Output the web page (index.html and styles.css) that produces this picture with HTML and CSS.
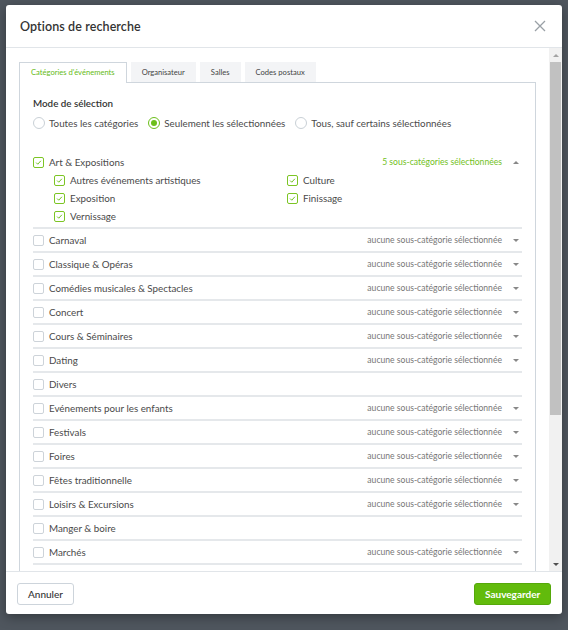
FILE: index.html
```html
<!DOCTYPE html>
<html lang="fr">
<head>
<meta charset="utf-8">
<title>Options de recherche</title>
<link rel="stylesheet" href="styles.css">
</head>
<body>
<div class="modal">
  <header class="modal-header">
    <h1 class="modal-title">Options de recherche</h1>
    <svg class="close" viewBox="0 0 12 12" width="12" height="12"><path d="M1 1 L11 11 M11 1 L1 11" stroke="#9aa0a6" stroke-width="1.3" fill="none"/></svg>
  </header>
  <div class="modal-body">
    <div class="content">
      <ul class="tabs">
        <li class="tab active">Catégories d'événements</li>
        <li class="tab">Organisateur</li>
        <li class="tab">Salles</li>
        <li class="tab">Codes postaux</li>
      </ul>
      <div class="panel">
        <div class="mode-label">Mode de sélection</div>
        <div class="radios">
          <label class="radio"><span class="circle"></span>Toutes les catégories</label>
          <label class="radio"><span class="circle on"></span>Seulement les sélectionnées</label>
          <label class="radio"><span class="circle"></span>Tous, sauf certains sélectionnées</label>
        </div>
        <ul class="cats">
          <li class="cat cat-open">
            <div class="cat-head">
              <span class="box on"><svg viewBox="0 0 11 11"><path d="M2.6 5.6 L4.6 7.6 L8.4 3.4"/></svg></span>
              <span class="cat-name">Art &amp; Expositions</span>
              <span class="sub sub-on">5 sous-catégories sélectionnées</span>
              <span class="caret up"></span>
            </div>
            <div class="subs">
              <div class="subitem"><span class="box on"><svg viewBox="0 0 11 11"><path d="M2.6 5.6 L4.6 7.6 L8.4 3.4"/></svg></span>Autres événements artistiques</div>
              <div class="subitem"><span class="box on"><svg viewBox="0 0 11 11"><path d="M2.6 5.6 L4.6 7.6 L8.4 3.4"/></svg></span>Culture</div>
              <div class="subitem"><span class="box on"><svg viewBox="0 0 11 11"><path d="M2.6 5.6 L4.6 7.6 L8.4 3.4"/></svg></span>Exposition</div>
              <div class="subitem"><span class="box on"><svg viewBox="0 0 11 11"><path d="M2.6 5.6 L4.6 7.6 L8.4 3.4"/></svg></span>Finissage</div>
              <div class="subitem"><span class="box on"><svg viewBox="0 0 11 11"><path d="M2.6 5.6 L4.6 7.6 L8.4 3.4"/></svg></span>Vernissage</div>
            </div>
          </li>
          <li class="cat"><div class="cat-head"><span class="box"></span><span class="cat-name">Carnaval</span><span class="sub">aucune sous-catégorie sélectionnée</span><span class="caret"></span></div></li>
          <li class="cat"><div class="cat-head"><span class="box"></span><span class="cat-name">Classique &amp; Opéras</span><span class="sub">aucune sous-catégorie sélectionnée</span><span class="caret"></span></div></li>
          <li class="cat"><div class="cat-head"><span class="box"></span><span class="cat-name">Comédies musicales &amp; Spectacles</span><span class="sub">aucune sous-catégorie sélectionnée</span><span class="caret"></span></div></li>
          <li class="cat"><div class="cat-head"><span class="box"></span><span class="cat-name">Concert</span><span class="sub">aucune sous-catégorie sélectionnée</span><span class="caret"></span></div></li>
          <li class="cat"><div class="cat-head"><span class="box"></span><span class="cat-name">Cours &amp; Séminaires</span><span class="sub">aucune sous-catégorie sélectionnée</span><span class="caret"></span></div></li>
          <li class="cat"><div class="cat-head"><span class="box"></span><span class="cat-name">Dating</span><span class="sub">aucune sous-catégorie sélectionnée</span><span class="caret"></span></div></li>
          <li class="cat"><div class="cat-head"><span class="box"></span><span class="cat-name">Divers</span></div></li>
          <li class="cat"><div class="cat-head"><span class="box"></span><span class="cat-name">Evénements pour les enfants</span><span class="sub">aucune sous-catégorie sélectionnée</span><span class="caret"></span></div></li>
          <li class="cat"><div class="cat-head"><span class="box"></span><span class="cat-name">Festivals</span><span class="sub">aucune sous-catégorie sélectionnée</span><span class="caret"></span></div></li>
          <li class="cat"><div class="cat-head"><span class="box"></span><span class="cat-name">Foires</span><span class="sub">aucune sous-catégorie sélectionnée</span><span class="caret"></span></div></li>
          <li class="cat"><div class="cat-head"><span class="box"></span><span class="cat-name">Fêtes traditionnelle</span><span class="sub">aucune sous-catégorie sélectionnée</span><span class="caret"></span></div></li>
          <li class="cat"><div class="cat-head"><span class="box"></span><span class="cat-name">Loisirs &amp; Excursions</span><span class="sub">aucune sous-catégorie sélectionnée</span><span class="caret"></span></div></li>
          <li class="cat"><div class="cat-head"><span class="box"></span><span class="cat-name">Manger &amp; boire</span></div></li>
          <li class="cat"><div class="cat-head"><span class="box"></span><span class="cat-name">Marchés</span><span class="sub">aucune sous-catégorie sélectionnée</span><span class="caret"></span></div></li>
          <li class="cat"><div class="cat-head"><span class="box"></span></div></li>
        </ul>
      </div>
    </div>
    <div class="scrollbar">
      <div class="sb-btn"><span class="sb-arrow up"></span></div>
      <div class="sb-thumb"></div>
      <div class="sb-track"></div>
      <div class="sb-btn"><span class="sb-arrow down"></span></div>
    </div>
  </div>
  <footer class="modal-footer">
    <button class="btn btn-default">Annuler</button>
    <button class="btn btn-primary">Sauvegarder</button>
  </footer>
</div>
</body>
</html>
```
FILE: styles.css
```css
* { box-sizing: border-box; }
html, body { margin: 0; }
body {
  background: #4f565e;
  height: 630px;
  overflow: hidden;
  padding: 5px 6px 0;
  font-family: Lato, "Noto Sans", sans-serif;
  color: #4a4a4a;
}
ul { list-style: none; margin: 0; padding: 0; }

.modal {
  width: 556px;
  height: 609px;
  background: #fff;
  border-radius: 3px;
  display: flex;
  flex-direction: column;
  overflow: hidden;
  box-shadow: 0 3px 12px rgba(0, 0, 0, 0.35);
}
.modal-header {
  height: 43px;
  flex: none;
  border-bottom: 1px solid #e1e5e9;
  display: flex;
  align-items: center;
  justify-content: space-between;
  padding: 0 16px 0 14px;
}
.modal-title { margin: 0; font-size: 12.5px; font-weight: 600; color: #333; letter-spacing: 0.1px; }
.close { display: block; }

.modal-body { height: 523px; flex: none; display: flex; }
.content { flex: 1; padding: 14px 13px 0; overflow: hidden; }

.tabs { display: flex; gap: 4px; height: 20px; }
.tab {
  font-size: 7.6px;
  line-height: 20px;
  padding: 0 11px;
  background: #f3f4f6;
  color: #444;
}
.tab.active {
  background: #fff;
  color: #66bb17;
  border: 1px solid #cfd6dd;
  border-bottom: none;
  line-height: 19px;
  height: 21px;
  position: relative;
  z-index: 1;
}
.panel {
  border: 1px solid #cfd6dd;
  padding: 12px 13px 0;
  height: 560px;
}
.mode-label { font-size: 9.8px; font-weight: 600; line-height: 16px; color: #333; }
.radios { display: flex; align-items: center; height: 16px; margin-top: 4px; }
.radio { display: flex; align-items: center; gap: 4px; margin-right: 10px; font-size: 9.8px; color: #4a4a4a; }
.circle {
  width: 12px; height: 12px;
  border: 1px solid #c9d0d6;
  border-radius: 50%;
  display: flex; align-items: center; justify-content: center;
}
.circle.on { border-color: #6cbf1a; }
.circle.on::after { content: ""; width: 6px; height: 6px; border-radius: 50%; background: #6cbf1a; }

.cats { margin-top: 22px; }
.cat { border-bottom: 2px solid #e5e8eb; }
.cat-head { display: flex; align-items: center; height: 22px; }
.cat-open .cat-head { height: 18px; }
.cat-name { font-size: 9.8px; color: #4a4a4a; margin-left: 5px; }
.box {
  width: 11px; height: 11px; flex: none;
  border: 1px solid #cdd3d9;
  border-radius: 2px;
  background: #fff;
  display: block;
}
.box svg { display: block; width: 9px; height: 9px; }
.box.on { border-color: #7cc524; }
.box svg path { fill: none; stroke: #6cbf1a; stroke-width: 1.2; }
.sub { margin-left: auto; font-size: 8.6px; color: #777; }
.sub.sub-on { color: #72c11c; }
.caret { width: 12px; height: 12px; margin-left: 8px; display: flex; align-items: center; justify-content: center; }
.caret::after {
  content: ""; width: 0; height: 0;
  border-left: 3px solid transparent; border-right: 3px solid transparent;
  border-top: 3px solid #888;
}
.caret.up::after { border-top: none; border-bottom: 3px solid #888; }

.subs {
  display: grid;
  grid-template-columns: 233px 1fr;
  grid-auto-rows: 18px;
  padding-left: 21px;
  padding-bottom: 2px;
}
.subitem { display: flex; align-items: center; gap: 5px; font-size: 9.8px; color: #4a4a4a; }

.scrollbar { width: 13px; flex: none; background: #f1f1f1; display: flex; flex-direction: column; align-items: center; }
.sb-btn { height: 14px; width: 100%; display: flex; align-items: center; justify-content: center; flex: none; }
.sb-arrow { width: 0; height: 0; border-left: 3px solid transparent; border-right: 3px solid transparent; }
.sb-arrow.up { border-bottom: 3px solid #a3a3a3; }
.sb-arrow.down { border-top: 3px solid #505050; }
.sb-thumb { width: 11px; height: 353px; background: #c1c1c1; flex: none; }
.sb-track { flex: 1; }

.modal-footer {
  height: 43px; flex: none;
  border-top: 1px solid #e1e5e9;
  padding: 11px 11px 0;
  display: flex; justify-content: space-between; align-items: flex-start;
}
.btn {
  height: 22px;
  font-family: inherit;
  font-size: 10px;
  border-radius: 3px;
  padding: 0 10px;
}
.btn-default { width: 57px; background: #fff; border: 1px solid #cdd4db; color: #333; font-weight: 500; }
.btn-primary { width: 77px; background: #62bb0c; border: 1px solid #55a80a; color: #fff; font-weight: 700; }
```
